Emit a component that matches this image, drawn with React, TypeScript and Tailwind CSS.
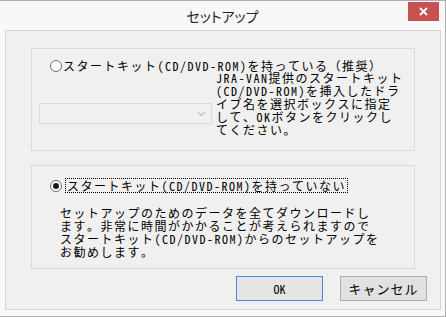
const jp = "font-['Noto_Sans_Mono_CJK_JP','Noto_Sans_CJK_JP',monospace]";

const kitLines = [
  "JRA-VAN提供のスタートキット",
  "(CD/DVD-ROM)を挿入したドラ",
  "イブ名を選択ボックスに指定",
  "して、OKボタンをクリックし",
  "てください。",
];

const downloadLines = [
  "セットアップのためのデータを全てダウンロードし",
  "ます。非常に時間がかかることが考えられますので",
  "スタートキット(CD/DVD-ROM)からのセットアップを",
  "お勧めします。",
];

function Radio({ checked }: { checked?: boolean }) {
  return (
    <span className="w-[12px] h-[12px] rounded-full border border-[#6e6e6e] bg-white flex items-center justify-center shrink-0">
      {checked && <span className="w-[6px] h-[6px] rounded-full bg-[#1a1a1a]" />}
    </span>
  );
}

function Lines({ lines }: { lines: string[] }) {
  return (
    <div className="whitespace-nowrap">
      {lines.map((l) => (
        <div key={l} className="h-[13px]">{l}</div>
      ))}
    </div>
  );
}

export default function App() {
  return (
    <div className="w-[446px] h-[317px] bg-[#f8f8f8] border-t border-r border-b border-[#b0b0b0] flex flex-col overflow-hidden">
      {/* title bar */}
      <div className="h-[29px] relative flex justify-center">
        <span className="mt-[5px] text-[14px] leading-[20px] text-[#222] font-['Noto_Sans_CJK_JP',sans-serif] [font-feature-settings:'palt']">
          セットアップ
        </span>
        <div className="absolute right-[6px] top-[1px] w-[31px] h-[19px] bg-[#c75050] flex items-center justify-center">
          <svg width="9" height="9" viewBox="0 0 9 9">
            <path d="M1 1L8 8M8 1L1 8" stroke="#fff" strokeWidth="1.8" />
          </svg>
        </div>
      </div>

      {/* client area */}
      <div className={`ml-[5px] w-[436px] h-[280px] border border-[#d4d4d4] bg-[#f0f0f0] flex flex-col pt-[17px] text-[12px] leading-[13px] tracking-[1.5px] text-black ${jp}`}>
        <div className="px-[25px] flex flex-col gap-[14px]">
          <div className="h-[103px] border border-[#d9d9d9] pt-[10px]">
            <div className="flex items-center h-[13px] pl-[18px]">
              <Radio />
              <span className="ml-[1px] whitespace-nowrap">スタートキット(CD/DVD-ROM)を持っている（推奨）</span>
            </div>
            <div className="flex items-start mt-[-1px] pl-[7px]">
              <div className="mt-[32px] w-[173px] h-[21px] border border-[#d9d9d9] bg-[#f0f0f0] flex items-center justify-end pr-[5px]">
                <svg width="9" height="6" viewBox="0 0 9 6">
                  <path d="M1 1L4.5 4.5L8 1" stroke="#c2c2c2" strokeWidth="1.3" fill="none" />
                </svg>
              </div>
              <div className="ml-[4px]">
                <Lines lines={kitLines} />
              </div>
            </div>
          </div>

          <div className="h-[104px] border border-[#d9d9d9] pt-[12px]">
            <div className="flex items-center h-[15px] pl-[18px]">
              <Radio checked />
              <span className="ml-[3px] h-[15px] px-[1px] flex items-center border border-dotted border-black whitespace-nowrap">
                スタートキット(CD/DVD-ROM)を持っていない
              </span>
            </div>
            <div className="mt-[13px] pl-[28px]">
              <Lines lines={downloadLines} />
            </div>
          </div>
        </div>

        <div className="flex justify-end gap-[17px] mt-[7px] pr-[13px]">
          <button className="w-[87px] h-[25px] border border-[#3c8ee0] bg-[#e5e5e5] text-[12px] tracking-normal">
            OK
          </button>
          <button className="w-[87px] h-[25px] border border-[#adadad] bg-[#e1e1e1] text-[13px] tracking-[1px]">
            キャンセル
          </button>
        </div>
      </div>
    </div>
  );
}
